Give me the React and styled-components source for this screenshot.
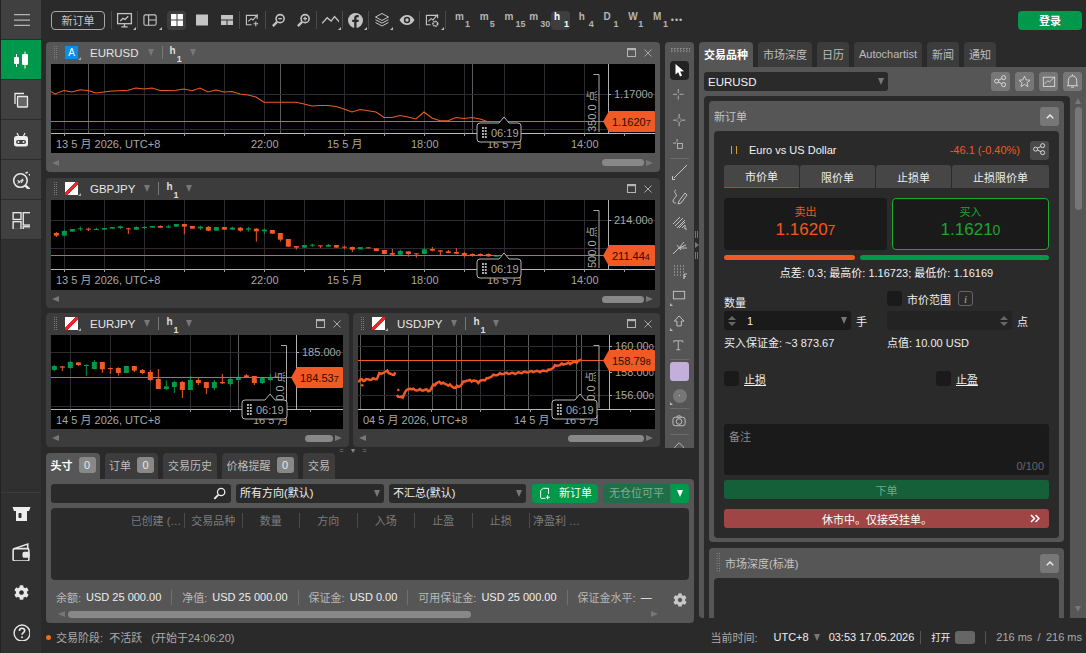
import React from 'react';
import styled, { createGlobalStyle } from 'styled-components';
import { FaCog } from 'react-icons/fa';

const GlobalStyle = createGlobalStyle`
  html, body { margin: 0; padding: 0; background: #2a2a2a; overflow: hidden; }
  * { box-sizing: border-box; }
  body { font-family: "Liberation Sans", "Noto Sans CJK SC", sans-serif; font-size: 11px; color: #e6e6e6; }
`;

const ORANGE = '#f15a24';
const GREEN = '#00984a';

const Page = styled.div`display: grid; grid-template-columns: 41px 1fr; grid-template-rows: 653px; width: 1086px; height: 653px; overflow: hidden;`;

/* ---------- left rail ---------- */
const Rail = styled.nav`display: flex; flex-direction: column; background: #303030; border-left: 1px solid #222; height: 653px;`;
const RailItem = styled.div`
  display: flex; align-items: center; justify-content: center; height: ${p => p.$h || 40}px;
  background: ${p => (p.$active ? GREEN : p.$plain ? 'transparent' : '#404040')};
  border-bottom: ${p => (p.$plain ? 'none' : '1px solid #2c2c2c')};
  color: ${p => p.$c || '#e8e8e8'}; flex-shrink: 0;
`;
const RailSpacer = styled.div`flex: 1; border-bottom: 1px solid #3c3c3c; margin-bottom: 1px;`;
const RailGroup = styled.div`display: flex; flex-direction: column; margin-bottom: 3px;`;

const Main = styled.div`display: flex; flex-direction: column; min-width: 0; height: 653px;`;

/* ---------- top toolbar ---------- */
const Toolbar = styled.header`display: flex; align-items: center; height: 40px; padding-left: 10px; flex-shrink: 0;`;
const NewOrder = styled.div`width: 54px; height: 19px; border: 1px solid #a8a8a8; border-radius: 4px; color: #c8c8c8; display: flex; align-items: center; justify-content: center; margin-right: 6px;`;
const Sep = styled.span`width: 1px; height: 18px; background: #4a4a4a; flex-shrink: 0;`;
const ToolCell = styled.div`width: 25px; height: 19px; display: flex; align-items: center; justify-content: center; color: #c4c4c4; flex-shrink: 0; position: relative; margin-left: ${p => p.$ml || 0}px;`;
const ActiveBg = styled.div`width: 19px; height: 19px; border-radius: 4px; background: #3e3e3e; display: flex; align-items: center; justify-content: center; color: #fff;`;
const Corner = styled.i`position: absolute; right: 1px; bottom: 0; width: 0; height: 0; border-left: 3px solid transparent; border-bottom: 3px solid #bbb;`;
const Frames = styled.div`display: flex; margin-left: 6px;`;
const Frame = styled.div`
  width: 19px; height: 19px; margin-right: 5.75px; border-radius: 4px; background: ${p => (p.$active ? '#3e3e3e' : 'transparent')};
  font-weight: 700; color: ${p => (p.$active ? '#fff' : '#b4b4b4')}; position: relative; font-size: 10px; padding: 0 0 0 3px; line-height: 11px; white-space: nowrap;
`;
const FrameSub = styled.sub`position: absolute; right: ${p => (p.$wide ? -5 : 1)}px; top: 8px; font-size: 9px; line-height: 11px; vertical-align: baseline;`;
const More = styled.div`color: #bbb; font-size: 9px; letter-spacing: 1px; margin-left: -4px;`;
const Login = styled.div`margin-left: auto; margin-right: 4px; width: 64px; height: 19px; background: ${GREEN}; border-radius: 4px; display: flex; align-items: center; justify-content: center; color: #fff; font-weight: 700; font-size: 11px;`;

/* ---------- workspace ---------- */
const Workspace = styled.div`display: flex; flex: 1; padding: 2px 0 0 5px; min-height: 0;`;
const LeftCol = styled.div`width: 648px; display: flex; flex-direction: column; flex-shrink: 0;`;
const TopRow = styled.div`display: flex; gap: 5px; height: 406px;`;
const Charts = styled.div`width: 614px; display: flex; flex-direction: column;`;
const ChartRow = styled.div`display: flex; gap: 4px; margin-top: ${p => p.$mt || 0}px;`;
const ChartWin = styled.section`
  width: ${p => p.$w}px; height: ${p => p.$h}px; border-radius: 4px; background: ${p => (p.$active ? '#565656' : '#3c3c3c')};
  display: flex; flex-direction: column; padding: 0 5px; flex-shrink: 0;
`;
const ChartHead = styled.div`height: ${p => p.$h || 22}px; display: flex; align-items: center; flex-shrink: 0; padding-bottom: 1px;`;
const Grip = styled.span`width: 4px; height: 14px; margin: 0 8px 0 2px; flex-shrink: 0; background-image: conic-gradient(#7c7c7c 25%, transparent 0 100%); background-size: 2px 2px;`;
const SymIcon = styled.span`
  width: 13px; height: 13px; flex-shrink: 0; display: flex; align-items: center; justify-content: center; color: #fff; font-size: 10px; position: relative; margin-right: 12px;
  background: ${p => (p.$blue ? '#0a8fe8' : 'linear-gradient(135deg, #fff 0 42%, #e8262a 42% 58%, #fff 58%)')};
  &::after { content: ''; position: absolute; right: -3px; bottom: -1px; border-left: 3px solid transparent; border-bottom: 3px solid #aaa; }
`;
const SymName = styled.span`color: #e4e4e4; font-size: 11.5px;`;
const Tri = styled.i`display: inline-block; width: 0; height: 0; border-left: 3.5px solid transparent; border-right: 3.5px solid transparent; border-top: 7px solid ${p => p.$c || '#777'}; margin-left: ${p => (p.$push ? 'auto' : `${p.$ml ?? 9}px`)}; flex-shrink: 0;`;
const HeadSep = styled.span`width: 1px; height: 13px; background: #777; margin: 0 7px 0 8px;`;
const Period = styled.span`font-weight: 700; font-size: 10px; color: #ddd; position: relative; top: -2px; width: 15px;`;
const PeriodSub = styled.span`position: relative; top: 8px; left: 1px; font-size: 9px;`;
const WinBtns = styled.div`margin-left: auto; display: flex; align-items: center; gap: 8px; padding-right: 3px; color: #aaa;`;
const Plot = styled.svg`display: block; flex-shrink: 0;`;
const AxisText = styled.text`font-size: 11px; fill: ${p => p.$c || '#a8a8a8'};`;
const Small = styled.tspan`font-size: 9px;`;

const HScroll = styled.div`flex: 1; display: flex; align-items: center; padding: 0 2px 0 1px; gap: 2px;`;
const ScrollTrack = styled.div`flex: 1; display: flex; justify-content: ${p => (p.$start ? 'flex-start' : 'flex-end')};`;
const Thumb = styled.div`width: ${p => p.$w}px; height: 7px; border-radius: 4px; background: #888;`;
const ArrowL = styled.i`width: 0; height: 0; border-top: 3.5px solid transparent; border-bottom: 3.5px solid transparent; border-right: 7px solid #777; flex-shrink: 0;`;
const ArrowR = styled.i`width: 0; height: 0; border-top: 3.5px solid transparent; border-bottom: 3.5px solid transparent; border-left: 7px solid #777; flex-shrink: 0;`;

/* ---------- drawing tools ---------- */
const ToolsCol = styled.aside`width: 29px; height: 406px; background: #555; border-radius: 4px 4px 0 0; overflow: hidden; display: flex; flex-direction: column; align-items: center; flex-shrink: 0;`;
const ToolGrip = styled.div`height: 16px; width: 20px; flex-shrink: 0; padding: 6px 0 5px; background-clip: content-box; background-origin: content-box; background-image: conic-gradient(#8a8a8a 25%, transparent 0 100%); background-size: 3px 2.5px;`;
const Tool = styled.div`height: 25px; width: 19px; flex-shrink: 0; display: flex; align-items: center; justify-content: center; color: #c4c4c4; position: relative;`;
const ToolActive = styled.div`width: 19px; height: 19px; background: #222; border-radius: 4px; display: flex; align-items: center; justify-content: center; color: #fff;`;
const ToolDiv = styled.div`height: 1px; width: 19px; background: #6a6a6a; flex-shrink: 0;`;
const Swatch = styled.div`width: 19px; height: 19px; background: #c4aedb; border-radius: 3px; margin: 2px 0; flex-shrink: 0;`;
const Dot = styled.div`width: 14px; height: 14px; border-radius: 50%; background: #777; display: flex; align-items: center; justify-content: center; &::after { content: ''; width: 1.5px; height: 1.5px; background: #ddd; border-radius: 50%; }`;
const CornerL = styled.i`position: absolute; left: 0; bottom: 3px; border-right: 3px solid transparent; border-bottom: 3px solid #bbb;`;

const HSash = styled.div`height: 5px; width: 614px; display: flex; align-items: center; justify-content: center; gap: 6px; color: #888; font-size: 7px; line-height: 5px; flex-shrink: 0;`;
const VSash = styled.div`width: 5px; height: 406px; display: flex; flex-direction: column; align-items: center; justify-content: center; gap: 4px; color: #8a8a8a; flex-shrink: 0;`;
const SashBars = styled.span`width: 3px; height: 7px; border-left: 1px solid #777; border-right: 1px solid #777;`;
const SashTri = styled.i`border-top: 3px solid transparent; border-bottom: 3px solid transparent; border-left: 4px solid #777;`;

/* ---------- bottom panel ---------- */
const TabBar = styled.div`height: ${p => p.$h}px; display: flex; gap: 5px; flex-shrink: 0;`;
const Tab = styled.div`
  padding: 0 0 2px; display: flex; align-items: center; gap: 6px; border-radius: 4px 4px 0 0;
  background: ${p => (p.$active ? '#565656' : '#3c3c3c')}; color: ${p => (p.$active ? '#fff' : '#bdbdbd')}; white-space: nowrap; font-size: 11px;
  width: ${p => p.$w}px; justify-content: center;
  font-weight: ${p => (p.$active ? 700 : 400)};
`;
const Badge = styled.span`width: 17px; height: 16px; border-radius: 3px; background: #888; color: #e8e8e8; display: flex; align-items: center; justify-content: center; font-size: 11px; font-weight: 400;`;
const BottomPanel = styled.div`height: 144px; background: #565656; border-radius: 0 4px 4px 4px; padding: 5px; display: flex; flex-direction: column;`;
const FilterRow = styled.div`display: flex; height: 19px; align-items: stretch; line-height: 17px;`;
const Field = styled.div`
  width: ${p => p.$w}px; margin-left: ${p => p.$ml || 0}px; background: #2a2a2a; border-radius: 3px; display: flex; align-items: center;
  padding: 0 4px; color: #eee; justify-content: space-between; flex-shrink: 0;
`;
const GreenBtn = styled.div`width: 66px; margin-left: 6px; background: ${GREEN}; border-radius: 4px; color: #fff; display: flex; align-items: center; justify-content: center; gap: 7px;`;
const SplitBtn = styled.div`width: 86px; margin-left: 5px; display: flex; border-radius: 4px; overflow: hidden;`;
const SplitMain = styled.div`flex: 1; background: #1f6e47; color: #7fae95; display: flex; align-items: center; justify-content: center;`;
const SplitArrow = styled.div`width: 19px; background: ${GREEN}; border-left: 1px solid #2b7a52; display: flex; align-items: center; justify-content: center;`;
const Table = styled.div`height: 72px; margin-top: 5px; background: #2a2a2a; border-radius: 4px; display: flex; padding: 5px 0 0 77px; align-items: flex-start;`;
const Th = styled.div`width: ${p => p.$w || 57.5}px; height: 15px; border-right: ${p => (p.$last ? 'none' : '1px solid #4a4a4a')}; color: #7c7c7c; display: flex; align-items: center; justify-content: ${p => (p.$left ? 'flex-start' : 'center')}; padding-left: ${p => (p.$left ? 3 : 0)}px; padding-bottom: 2px; white-space: nowrap; flex-shrink: 0;`;
const Summary = styled.div`display: flex; align-items: center; height: 30px; padding: 4px 0 0 5px; white-space: nowrap;`;
const SumLabel = styled.span`color: #b8b8b8; margin-right: 5px;`;
const SumVal = styled.span`color: #eee;`;
const SumSep = styled.span`width: 1px; height: 15px; background: #707070; margin: 0 10px;`;
const SumGear = styled.span`margin-left: auto; margin-right: 2px; color: #c8c8c8; display: flex; position: relative; top: 3px;`;
const BottomScroll = styled.div`display: flex; align-items: center; height: 8px; padding: 0 31px 0 7px; gap: 3px;`;

/* ---------- right panel ---------- */
const RightCol = styled.div`width: 387px; height: 576px; display: flex; flex-direction: column; flex-shrink: 0;`;
const RightBody = styled.div`flex: 1; min-height: 0; background: #565656; border-radius: 0 0 0 4px; padding: 5px 0 0 5px; display: flex; flex-direction: column;`;
const SymbolRow = styled.div`display: flex; height: 19px; padding-right: 4px; align-items: stretch;`;
const SymbolSelect = styled.div`width: 184px; background: #2a2a2a; border-radius: 3px; display: flex; align-items: center; justify-content: space-between; padding: 0 4px; color: #f2f2f2; font-size: 11.5px;`;
const SquareBtns = styled.div`margin-left: auto; display: flex; gap: 5px;`;
const SquareBtn = styled.div`width: 19px; height: 19px; border-radius: 3px; background: ${p => (p.$dark ? '#4a4a4a' : '#777')}; color: #ddd; display: flex; align-items: center; justify-content: center; flex-shrink: 0;`;
const ScrollWrap = styled.div`flex: 1; min-height: 0; display: flex; margin-top: 5px;`;
const ScrollArea = styled.div`width: 366px; background: #2a2a2a; border-radius: 4px 4px 0 0; padding: 5px 6px 5px 5px; overflow: hidden; flex-shrink: 0;`;
const VBar = styled.div`flex: 1; display: flex; flex-direction: column; align-items: center; padding: 2px 0 6px;`;
const VThumb = styled.div`width: 7px; height: 103px; margin-top: 3px; border-radius: 4px; background: #777;`;
const ArrowUp = styled.i`border-left: 3.5px solid transparent; border-right: 3.5px solid transparent; border-bottom: 6px solid #777;`;
const ArrowDn = styled.i`margin-top: auto; border-left: 3.5px solid transparent; border-right: 3.5px solid transparent; border-top: 6px solid #777;`;

const Card = styled.div`background: #565656; border-radius: 4px; padding: 0 5px 4px; margin-bottom: 6px;`;
const CardHead = styled.div`height: 30px; display: flex; align-items: center; color: #c4c4c4; justify-content: space-between;`;
const CardTitle = styled.div`display: flex; align-items: center; gap: 5px;`;
const CardGrip = styled.span`width: 5px; height: 20px; margin-left: 1px; background-image: conic-gradient(#9a9a9a 25%, transparent 0 100%); background-size: 2.5px 2.5px;`;
const Inner = styled.div`background: #2a2a2a; border-radius: 4px; padding: 9px 10px 10px; min-height: ${p => p.$min || 0}px;`;
const SymLine = styled.div`height: 20px; display: flex; align-items: center; color: #f2f2f2;`;
const Pause = styled.span`width: 6px; height: 8px; border-left: 1px solid #d8a030; border-right: 1px solid #d8a030; margin: 0 12px 0 7px;`;
const Change = styled.span`margin-left: auto; color: #f0591c; margin-right: 10px;`;
const OrderTabs = styled.div`display: grid; grid-template-columns: 75px 75px 75px 1fr; gap: 1px; height: 23px; margin-top: 5px;`;
const OrderTab = styled.div`background: #464646; display: flex; align-items: center; justify-content: center; color: #eee; border-bottom: ${p => (p.$active ? `1px solid ${GREEN}` : 'none')}; border-radius: 3px 3px 0 0;`;
const Quote = styled.div`display: grid; grid-template-columns: 163px 157px; gap: 5px; margin-top: 10px; height: 52px;`;
const QuoteBox = styled.div`background: #1a1a1a; border-radius: 4px; border: ${p => (p.$buy ? '1px solid #1caa2c' : 'none')}; display: flex; flex-direction: column; align-items: center; justify-content: flex-start; padding-top: ${p => (p.$buy ? 4 : 5)}px; color: ${p => (p.$buy ? '#1fa52e' : '#f0591c')};`;
const Price = styled.div`font-size: 17px; line-height: 22px;`;
const PriceEnd = styled.span`font-size: 14px;`;
const Bars = styled.div`display: grid; grid-template-columns: 131px 189px; gap: 5px; margin-top: 5px; height: 5px;`;
const Bar = styled.div`background: ${p => p.$c}; border-radius: 3px;`;
const Stats = styled.div`height: 16px; margin-top: 4px; display: flex; align-items: center; justify-content: center; color: #f2f2f2;`;
const FormGrid = styled.div`display: grid; grid-template-columns: 163px 162px; grid-template-rows: 20px 19px 20px; margin-top: 11px;`;
const Label = styled.div`color: #eee; display: flex; align-items: flex-end; padding-bottom: 1px;`;
const CheckRow = styled.div`display: flex; align-items: center; gap: 5px; color: #eee; height: 15px;`;
const Box = styled.span`width: 15px; height: 15px; border-radius: 3px; background: #1a1a1a; flex-shrink: 0;`;
const InfoI = styled.span`width: 15px; height: 15px; border: 1px solid #666; border-radius: 3px; color: #aaa; font-family: "Liberation Serif", serif; font-style: italic; display: flex; align-items: center; justify-content: center; margin-left: 2px;`;
const InputRow = styled.div`display: flex; align-items: center; color: #eee;`;
const NumInput = styled.div`width: ${p => p.$w}px; height: 19px; background: ${p => (p.$dim ? '#232323' : '#1a1a1a')}; border-radius: 3px; display: flex; align-items: center; padding: 0 4px; margin-right: 5px; justify-content: ${p => (p.$dim ? 'flex-end' : 'flex-start')};`;
const Spin = styled.div`display: flex; flex-direction: column; gap: 2px;`;
const SpinU = styled.i`border-left: 4px solid transparent; border-right: 4px solid transparent; border-bottom: 4px solid #666;`;
const SpinD = styled.i`border-left: 4px solid transparent; border-right: 4px solid transparent; border-top: 4px solid #666;`;
const QtyValue = styled.span`margin-left: 11px; color: #eee;`;
const InfoLine = styled.div`display: flex; align-items: center; margin-top: 4px; color: #eee; height: 16px;`;
const StopRow = styled.div`display: grid; grid-template-columns: 212px 1fr; margin-top: 21px;`;
const Under = styled.span`text-decoration: underline; color: #eee;`;
const Note = styled.div`height: 51px; margin-top: 38px; background: #1a1a1a; border-radius: 3px; padding: 4px 5px 3px; display: flex; flex-direction: column; justify-content: space-between; color: #8a8a8a;`;
const Count = styled.div`text-align: right; color: #666;`;
const Submit = styled.div`height: 19px; margin-top: 5px; background: #156038; border-radius: 3px; color: #6fa88b; display: flex; align-items: center; justify-content: center;`;
const Closed = styled.div`height: 19px; margin-top: 10px; background: #a04545; border-radius: 3px; color: #fff; display: flex; align-items: center; padding-right: 9px; padding-left: 98px;`;
const ClosedArrows = styled.span`margin-left: auto; display: flex;`;

/* ---------- status ---------- */
const Status = styled.footer`height: 30px; display: flex; align-items: center; padding: 0 4px 2px 5px; flex-shrink: 0; color: #aaa; white-space: nowrap;`;
const StatusDot = styled.i`width: 5px; height: 5px; border-radius: 50%; background: #f26a1b; margin-right: 5px;`;
const StatusRight = styled.div`margin-left: auto; display: flex; align-items: center;`;
const StatusLabel = styled.span`margin-right: 16px;`;
const Clock = styled.span`color: #eee; margin-left: ${p => p.$ml || 0}px;`;
const OpenLabel = styled.span`color: #eee; font-size: 9.5px;`;
const StatusSep = styled.span`width: 1px; height: 13px; background: #555; margin: 0 10px 0 ${p => p.$ml ?? 6}px;`;
const Toggle = styled.span`width: 20px; height: 13px; border-radius: 3px; background: #666; margin: 0 10px 0 5px;`;

/* ---------- svg helper ---------- */
const Svg = ({ s = 16, vb = 16, children, fill = 'none', sw = 1.2, ...r }) => (
  <svg width={s} height={s} viewBox={`0 0 ${vb} ${vb}`} fill={fill} stroke={fill === 'none' ? 'currentColor' : 'none'} strokeWidth={sw} {...r}>{children}</svg>
);

const IconGrid = () => <Svg fill="currentColor" s={12} vb={12}><path d="M0 0h5.5v5.5H0zM6.5 0H12v5.5H6.5zM0 6.5h5.5V12H0zM6.5 6.5H12V12H6.5z" /></Svg>;
const IconSingle = () => <Svg fill="currentColor" s={12} vb={12}><rect width="12" height="11" y="0.5" /></Svg>;
const IconTwoUp = () => <Svg fill="currentColor" s={12} vb={12}><path d="M0 1h12v4.5H0zM0 6.5h5.5V11H0zM6.5 6.5H12V11H6.5z" /></Svg>;
const IconMonitor = () => <Svg s={17}><rect x="1.5" y="1.5" width="13" height="9.5" /><path d="M4 8.5l2.5-2.5 2 1 3-3M8 11v2.5M5 14h6" /></Svg>;
const IconLayout = () => <Svg s={15}><rect x="1" y="2" width="13" height="11" rx="1.5" /><path d="M6 2v11M6 7.5h8" /></Svg>;
const IconChartAdd = () => <Svg s={15}><path d="M13 6.5V2.5H1.5v10H7M3.5 9l3-3 2 1.5 5-6M11.5 9v5M9 11.5h5" /></Svg>;
const IconZoom = ({ plus }) => <Svg s={15}><circle cx="9.7" cy="6" r="4.3" strokeWidth="1.7" /><path d="M6.5 9.5L2 14" strokeWidth="2.4" /><path d={plus ? 'M7.7 6h4M9.7 4v4' : 'M7.7 6h4'} strokeWidth="1.4" /></Svg>;
const IconLines = () => <Svg s={18}><path d="M1 11l4.5-5 3.5 3 3-4 5 5.5" /></Svg>;
const IconF = () => <svg width="15" height="15" viewBox="0 0 15 15"><circle cx="7.5" cy="7.5" r="7.5" fill="#c4c4c4" /><path d="M8.5 15V9h2l.3-2.3H8.5V5.3c0-.7.2-1.1 1.1-1.1h1.2V2.2C10.5 2.1 9.9 2 9.2 2 7.4 2 6.2 3.1 6.2 5v1.7h-2V9h2v6z" fill="#2a2a2a" /></svg>;
const IconLayers = () => <Svg s={16} sw="1"><path d="M8 1.5L14.5 5 8 8.5 1.5 5zM1.5 7.7L8 11.2l6.5-3.5M1.5 10.5L8 14l6.5-3.5" /></Svg>;
const IconEye = () => <svg width="16" height="16" viewBox="0 0 16 16"><path d="M0.5 8C2.5 4.5 5 3 8 3s5.5 1.5 7.5 5c-2 3.5-4.5 5-7.500 5S2.500 11.500 0.500 8z" fill="#c4c4c4" /><circle cx="8" cy="8" r="3.2" fill="#2a2a2a" /><circle cx="8" cy="8" r="1.7" fill="#c4c4c4" /></svg>;
const IconGearChart = () => <Svg s={15}><path d="M13.500 5.5v-3H1.500v10H6M3.500 9l3-3 2 1.500 5-6" /><circle cx="11" cy="11.500" r="2.500" strokeWidth="1.800" strokeDasharray="1.500 .6" /></Svg>;

const IconCandles = () => <svg width="18" height="18" viewBox="0 0 18 18" fill="#fff"><rect x="2" y="6" width="5" height="7" rx="1" /><rect x="4" y="3" width="1" height="13" /><rect x="10" y="3" width="6" height="11" rx="1" /><rect x="12.500" y="0.500" width="1" height="17" /></svg>;
const IconCopy = () => <Svg s={16} sw="1.300"><rect x="4.500" y="4.500" width="10" height="10.500" fill="#666" rx=".5" /><path d="M2 12V1.500h9" /></Svg>;
const IconRobot = () => <svg width="16" height="16" viewBox="0 0 16 16"><path d="M4 1l1.500 3M12 1l-1.500 3" stroke="#eee" strokeWidth="1.200" /><rect x="1" y="4" width="14" height="10.500" rx="2.500" fill="#eee" /><rect x="3" y="8" width="10" height="4" rx="2" fill="#404040" /><circle cx="5.500" cy="10" r="1" fill="#eee" /><circle cx="10.500" cy="10" r="1" fill="#eee" /></svg>;
const IconScan = () => <Svg s={18} sw="1.400"><circle cx="7.500" cy="8.500" r="6" /><path d="M12 13l4 4" strokeWidth="2.200" /><path d="M5 8l2 2.500M10 8l-2 2.500M5 11l5-4" strokeWidth="1" /><path d="M12 2l2-1M15 3.500l1.500-.5" /></Svg>;
const IconDash = () => <Svg s={18} sw="1.200"><rect x="1" y="1.500" width="7" height="6" /><rect x="10" y="1.500" width="7" height="11" /><rect x="1" y="9.500" width="7" height="7" /><rect x="10" y="14" width="7" height="2.500" /></Svg>;
const IconAtm = () => <svg width="19" height="16" viewBox="0 0 19 16"><path d="M0.500 1h18l-1.500 4H2z" fill="#eee" /><rect x="4" y="3" width="11" height="12" fill="#eee" /><rect x="6.500" y="7" width="3" height="5" rx=".8" fill="#303030" /></svg>;
const IconWallet = () => <Svg s={18} sw="1.400"><rect x="1" y="5" width="14" height="11" rx="1.500" /><path d="M2 5l12-4v4" /><rect x="10" y="8.500" width="5" height="4" fill="currentColor" rx="1" /></Svg>;
const IconHelp = () => <Svg s={17} sw="1.300"><circle cx="8.500" cy="8.500" r="7.500" /><path d="M6 6.500C6 5 7.100 4 8.500 4S11 5 11 6.300C11 8 8.500 8.200 8.500 10" strokeWidth="1.500" /><circle cx="8.500" cy="12.500" r=".9" fill="currentColor" stroke="none" /></Svg>;
const IconMenu = () => <Svg s={17} sw="1.200"><path d="M1 3.500h15M1 8.500h15M1 13.500h15" /></Svg>;

const IconMax = () => <svg width="9" height="9" viewBox="0 0 9 9"><rect x=".5" y=".5" width="8" height="8" fill="none" stroke="#b5b5b5" /><rect width="9" height="2.200" fill="#b5b5b5" /></svg>;
const IconX = () => <svg width="8" height="8" viewBox="0 0 8 8"><path d="M.5.500l7 7M7.500.500l-7 7" stroke="#aaa" /></svg>;
const IconShare = () => <Svg s={14} sw="1.100"><circle cx="3" cy="7" r="2.300" /><circle cx="11" cy="3" r="2.300" /><circle cx="11" cy="11" r="2.300" /><path d="M5 6l4-2M5 8l4 2" /></Svg>;
const IconStar = () => <Svg s={13} sw="1"><path d="M8 1.500l2 4.500 4.800.4-3.700 3.200 1.200 4.700L8 11.700l-4.300 2.600 1.200-4.700L1.200 6.400 6 6z" /></Svg>;
const IconChartBox = () => <Svg s={14} sw="1"><rect x="1.500" y="2.500" width="13" height="10.500" /><path d="M3 10l3.500-3.500 2 1.500 5-5" /></Svg>;
const IconBell = () => <Svg s={15} sw="1"><path d="M3.500 11.500V7c0-3 2-5 4.500-5s4.500 2 4.500 5v4.500l1 1H2.500zM8 .500v1.500M6.500 14h3" /></Svg>;
const IconChev = () => <svg width="8" height="5" viewBox="0 0 8 5"><path d="M.8 4.200L4 1l3.200 3.200" stroke="#e8e8e8" strokeWidth="1.500" fill="none" /></svg>;
const IconFind = () => <Svg s={14}><circle cx="9.300" cy="5.700" r="4.200" strokeWidth="1.400" /><path d="M6 9L1.500 13.500" strokeWidth="2.200" /></Svg>;
const IconDocAdd = () => <Svg s={14} sw="1.100"><path d="M3 12.500V4l3-2.500h6V8M8.500 13H3.500" /><path d="M11 9.500v4.500M9 11.700h4.500" strokeWidth="1.300" /></Svg>;
const IconDouble = () => <svg width="10" height="9" viewBox="0 0 10 9"><path d="M1 1l3.500 3.500L1 8M5.500 1L9 4.500 5.500 8" stroke="#fff" strokeWidth="1.500" fill="none" /></svg>;

const IconPointer = () => <svg width="10" height="13" viewBox="0 0 10 13"><path d="M.500 0v10.500l2.700-2.300 1.800 4.300 2-1-1.800-4 3.800-.3z" fill="#fff" /></svg>;
const IconCross = () => <Svg s={13} sw="1"><path d="M6.500 0v5M6.500 8v5M0 6.500h5M8 6.500h5" /></Svg>;
const IconCrossDots = () => <Svg s={14} sw="1"><path d="M7 0v5M7 9v5M0 7h5M9 7h5M5 5l.8.8M9 5l-.8.8M5 9l.8-.8M9 9l-.8-.8" /></Svg>;
const IconCrossBox = () => <Svg s={13} sw="1"><path d="M5 0v4M0 5h4" /><rect x="5.500" y="5.500" width="6" height="6" /></Svg>;
const IconLine = () => <Svg s={16} sw="1"><path d="M15 1L2 14" /><path d="M0 15.500h3M.5 12v3.500" /></Svg>;
const IconPen = () => <Svg s={16} sw="1"><path d="M4 1c-3 1 0 4 .5 5S1 10 1 12s2 2 3 2M7 12l6-8 2 2-6 8-3 1z" /></Svg>;
const IconHatch = () => <Svg s={16} sw="1"><path d="M1 10l7-7M3 12l8-8M5 14l8-8M7 14l6-6M10 14l3-3" /><path d="M13 11v4h2" /></Svg>;
const IconFork = () => <Svg s={16} sw="1"><path d="M1 15l6-6M7 9l5-6M7 9l7-3M7 9l8 0M5 6l4 5" /></Svg>;
const IconF2 = () => <Svg s={16} sw="1"><path d="M2 2h12M2 5h12M2 8h12M2 11h7" strokeDasharray="1 2" /><path d="M12 10v5M12 10h3M12 12.500h2" strokeWidth="1.200" /></Svg>;
const IconRect = () => <Svg s={15} sw="1"><rect x="1.500" y="2.500" width="12" height="8" /></Svg>;
const IconUp = () => <Svg s={14} sw="1.100"><path d="M7 1l5.500 6H9.500v5.500h-5V7H1.500z" /></Svg>;
const IconT = () => <Svg s={13} sw="1.100"><path d="M1 3V1h11v2M6.500 1v11M4 12h5" /></Svg>;
const IconCam = () => <Svg s={15} sw="1"><rect x="1" y="3.500" width="13" height="9" rx="2.500" /><circle cx="7.500" cy="8" r="3" /><path d="M5 3.500l1-1.500h3l1 1.500" /></Svg>;
const IconHouse = () => <Svg s={14} sw="1"><path d="M2 7l5-5 5 5v6H2z" /></Svg>;

/* ---------- chart ---------- */
const TOOLTIP_TEXT = '06:19';

function bubble({ x1, x2, y1, y2, nx, ny }) {
  return `M${x1 + 3} ${y1}L${nx - 5} ${y1}L${nx} ${ny}L${nx + 5} ${y1}L${x2 - 3} ${y1}Q${x2} ${y1} ${x2} ${y1 + 3}L${x2} ${y2 - 3}Q${x2} ${y2} ${x2 - 3} ${y2}L${x1 + 3} ${y2}Q${x1} ${y2} ${x1} ${y2 - 3}L${x1} ${y1 + 3}Q${x1} ${y1} ${x1 + 3} ${y1}Z`;
}

function Chart({ box, vGrid, vLight = [], hGrid, axisX, axisY, priceY, prices, tag, bracket, times, ticks, tip, children }) {
  const { x, y, w, h } = box;
  return (
    <Plot width={w} height={h} viewBox={`${x} ${y} ${w} ${h}`}>
      <rect x={x} y={y} width={w} height={h} fill="#000" />
      {vGrid.map(v => <line key={v} x1={v + .5} x2={v + .5} y1={y} y2={axisY} stroke="#2b2b32" />)}
      {vLight.map(v => <line key={v} x1={v + .5} x2={v + .5} y1={y} y2={axisY} stroke="#5c5c5c" />)}
      {hGrid.map(v => <line key={v} x1={x} x2={x + w} y1={v + .5} y2={v + .5} stroke="#2b2b32" />)}
      <line x1={axisX + .5} x2={axisX + .5} y1={y} y2={axisY} stroke="#b0b0b0" />
      {children}
      <line x1={x} x2={x + w} y1={priceY + .5} y2={priceY + .5} stroke={ORANGE} />
      <line x1={x} x2={x + w} y1={axisY + .5} y2={axisY + .5} stroke="#b8b8b8" />
      {ticks.map(v => <line key={v} x1={v + .5} x2={v + .5} y1={axisY} y2={axisY + 3} stroke="#999" />)}
      {prices.map(p => (
        <g key={p.t}>
          <line x1={axisX} x2={axisX + 3} y1={p.y + .5} y2={p.y + .5} stroke="#aaa" />
          <AxisText x={axisX + 6} y={p.y + 4}>{p.t}<Small>{p.e}</Small></AxisText>
        </g>
      ))}
      <path d={`M${bracket.x - 5} ${bracket.y1 + .5}H${bracket.x + .5}V${bracket.y2}`} stroke="#aaa" fill="none" />
      <AxisText $c="#aaa" x={bracket.tx} y={bracket.ty} transform={`rotate(-90 ${bracket.tx} ${bracket.ty})`}>{bracket.label}</AxisText>
      {times.map(t => <AxisText key={t.x} x={t.x} y={axisY + 15}>{t.t}</AxisText>)}
      <path d={`M${tag.x} ${(tag.y1 + tag.y2) / 2}L${tag.x + 6} ${tag.y1}H${x + w - 1}Q${x + w} ${tag.y1} ${x + w} ${tag.y1 + 1}V${tag.y2 - 1}Q${x + w} ${tag.y2} ${x + w - 1} ${tag.y2}H${tag.x + 6}Z`} fill={ORANGE} />
      <AxisText $c="#2a0d02" x={tag.x + 9} y={(tag.y1 + tag.y2) / 2 + 4}>{tag.t}<Small>{tag.e}</Small></AxisText>
      <path d={bubble(tip)} fill="#000" stroke="#b4b4b4" />
      <g fill="#b4b4b4">
        {[0, 1, 2, 3].map(r => [0, 1].map(c => <rect key={`${r}${c}`} x={tip.x1 + 5 + c * 2.8} y={tip.y1 + 4 + r * 3} width="1.900" height="2" />))}
      </g>
      <AxisText x={tip.x1 + 14} y={tip.y1 + 14}>{TOOLTIP_TEXT}</AxisText>
    </Plot>
  );
}

const Candles = ({ data, ox, oy }) => (
  <g>
    {data.map(([zx, t, b, wt, wb, c], i) => {
      const col = c === 'g' ? GREEN : ORANGE;
      const cx = ox + zx / 3;
      return (
        <g key={i}>
          <line x1={cx} x2={cx} y1={oy + wt / 3} y2={oy + wb / 3} stroke={col} />
          <rect x={cx - 2.500} y={oy + t / 3} width="5" height={Math.max((b - t) / 3, 1)} fill={col} />
        </g>
      );
    })}
  </g>
);

const EURUSD_LINE = '51,91.700 55,94 64,90.500 72,92 80,89.700 88,90.500 96,93 104,92 112,91 120,90.700 128,90.300 136,88 144,89 152,88 160,90.500 168,90.500 176,90.300 184,89 192,90.700 200,88 208,92 216,90 224,92 232,91.500 240,94 248,95 256,97 264,102.300 272,102.300 280,102.300 288,102.300 296,102.300 304,104 312,106 320,105.500 328,105.500 336,106.500 344,109 352,112 360,109.500 376,112 384,117.500 392,117.500 400,115.500 408,117 416,119 424,112 432,118 440,120.700 448,120.700 456,117.500 464,118.500 472,117.500 480,119 488,121.700';

const GBP = [
  [49,171,179,168,183,'o'],[73,165,179,162,180,'g'],[97,159,167,159,167,'g'],[121,157,160,152,165,'g'],[145,158,160,155,165,'o'],[169,159,161,155,162,'g'],[193,156,161,156,161,'g'],[217,153,158,153,158,'g'],[241,151,156,149,159,'g'],[265,157,158,155,174,'o'],[289,153,161,151,162,'g'],[313,153,156,150,159,'g'],[337,150,155,150,155,'g'],[361,150,155,148,156,'o'],[385,151,155,147,156,'g'],[409,144,152,144,152,'g'],[433,144,152,144,174,'o'],[457,150,158,150,158,'o'],[481,152,157,149,162,'g'],[505,153,164,150,165,'o'],[529,153,164,153,164,'g'],[553,153,161,153,161,'o'],[577,155,161,152,162,'g'],[601,155,164,153,167,'o'],[625,157,161,153,167,'g'],[649,158,166,156,197,'o'],[673,161,166,158,174,'g'],[697,162,173,162,173,'o'],[721,171,191,171,197,'o'],[745,189,212,189,212,'o'],[769,210,215,210,221,'o'],[793,207,215,207,215,'g'],[817,206,209,203,213,'g'],[841,208,209,208,216,'o'],[865,207,212,204,213,'g'],[889,207,215,207,215,'o'],[913,212,214,209,220,'o'],[937,213,221,212,228,'o'],[961,213,220,213,220,'g'],
  [985,214,217,214,217,'o'],[1009,217,225,217,225,'o'],[1033,222,234,222,234,'o'],[1057,231,236,219,238,'o'],[1081,225,236,221,238,'g'],[1105,226,234,226,242,'o'],[1129,232,235,232,245,'o'],[1153,220,234,214,234,'g'],[1177,219,224,213,226,'o'],[1201,223,227,223,238,'o'],[1225,226,231,222,232,'o'],[1249,228,233,216,234,'o'],[1273,231,239,228,245,'o'],[1297,234,238,232,242,'o'],[1321,234,238,232,241,'o'],[1345,234,241,232,242,'o'],[1369,239,241,239,241,'g']
];
const EJ = [
  [43,168,180,165,183,'g'],[67,169,173,169,183,'o'],[91,156,174,153,176,'g'],[115,157,165,157,168,'o'],[139,165,168,162,197,'g'],[163,156,177,150,178,'g'],[187,156,178,156,189,'o'],[211,174,175,173,191,'o'],[235,174,189,172,197,'o'],[259,168,189,168,189,'g'],[283,168,182,168,186,'o'],[307,180,189,177,193,'o'],[331,186,210,180,213,'o'],[355,207,237,177,237,'o'],[379,229,237,211,240,'g'],[403,216,231,213,249,'g'],[427,216,240,213,264,'o'],[451,210,240,198,240,'g'],[475,210,219,204,225,'o'],[499,216,234,216,252,'o'],[523,216,234,210,240,'g'],[547,216,220,192,222,'o'],[571,207,222,204,228,'g'],[595,201,210,195,213,'g'],[619,196,201,192,204,'o'],[643,198,219,198,225,'o'],[667,204,219,204,222,'g'],[691,204,210,192,213,'g']
];
const USD = '24,215 32,208 40,212 48,209 64,208 80,206 88,192 100,188 112,184 120,190 128,196 136,188';
const USD2 = '140,255 150,262 158,262 165,245 180,235 195,240 210,240 225,240 240,242 250,225 268,216 285,222 300,226 312,233 330,228 345,212 370,212 385,216 400,210 415,205 425,198 450,192 470,190 495,190 520,187 550,184 575,184 600,180 615,168 640,162 660,160 680,155 694,150';

/* densified, slightly noisy tick series in absolute pixels */
const toAbs = (s, ox, oy) => {
  const pts = s.split(' ').map(p => p.split(',').map(Number));
  const out = [];
  pts.forEach((p, i) => {
    const q = pts[i + 1] || p;
    const n = Math.max(1, Math.round((q[0] - p[0]) / 5));
    for (let k = 0; k < n; k++) {
      const t = k / n;
      const zx = p[0] + (q[0] - p[0]) * t;
      const zy = p[1] + (q[1] - p[1]) * t;
      const idx = out.length;
      const noise = Math.sin(idx * 1.7) * 0.7 + Math.sin(idx * 3.1) * 0.4;
      out.push(`${(ox + zx / 3).toFixed(1)},${(oy + zy / 3 + noise).toFixed(1)}`);
    }
  });
  return out.join(' ');
};

function WinHeader({ name, blue }) {
  return (
    <ChartHead>
      <Grip />
      <SymIcon $blue={blue}>{blue ? 'A' : ''}</SymIcon>
      <SymName>{name}</SymName>
      <Tri />
      <HeadSep />
      <Period>h<PeriodSub>1</PeriodSub></Period>
      <Tri $ml={5} />
      <WinBtns><IconMax /><IconX /></WinBtns>
    </ChartHead>
  );
}

const Scroll = ({ w }) => (
  <HScroll><ArrowL /><ScrollTrack><Thumb $w={w} /></ScrollTrack><ArrowR /></HScroll>
);

const FRAMES = [['m', '1'], ['m', '5'], ['m', '15'], ['m', '30'], ['h', '1', true], ['h', '4'], ['D', '1'], ['W', '1'], ['M', '1']];

const GRID_40 = [64, 104, 144, 184, 224, 264, 304, 344, 384, 424, 464, 504, 544, 584];
const TICK_40 = [...GRID_40, 624];
const TIMES = [{ t: '13 5 月 2026, UTC+8', x: 56 }, { t: '22:00', x: 251 }, { t: '15 5 月', x: 327 }, { t: '18:00', x: 411 }, { t: '16 5 月', x: 487 }, { t: '14:00', x: 571 }];

export default function App() {
  return (
    <>
      <GlobalStyle />
      <Page>
        <Rail>
          <RailItem $c="#b4b4b4"><IconMenu /></RailItem>
          <RailItem $active><IconCandles /></RailItem>
          <RailItem><IconCopy /></RailItem>
          <RailItem><IconRobot /></RailItem>
          <RailItem><IconScan /></RailItem>
          <RailItem><IconDash /></RailItem>
          <RailSpacer />
          <RailGroup>
            <RailItem $plain $h={40}><IconAtm /></RailItem>
            <RailItem $plain $h={36}><IconWallet /></RailItem>
            <RailItem $plain $h={44}><FaCog size={15} /></RailItem>
            <RailItem $plain $h={36}><IconHelp /></RailItem>
          </RailGroup>
        </Rail>

        <Main>
          <Toolbar>
            <NewOrder>新订单</NewOrder>
            <Sep />
            <ToolCell><IconMonitor /><Corner /></ToolCell>
            <Sep />
            <ToolCell><IconLayout /><Corner /></ToolCell>
            <ToolCell $ml={1}><ActiveBg><IconGrid /></ActiveBg></ToolCell>
            <ToolCell><IconSingle /></ToolCell>
            <ToolCell><IconTwoUp /></ToolCell>
            <Sep />
            <ToolCell><IconChartAdd /></ToolCell>
            <Sep />
            <ToolCell><IconZoom /></ToolCell>
            <ToolCell><IconZoom plus /></ToolCell>
            <Sep />
            <ToolCell><IconLines /><Corner /></ToolCell>
            <Sep />
            <ToolCell><IconF /><Corner /></ToolCell>
            <Sep />
            <ToolCell><IconLayers /><Corner /></ToolCell>
            <ToolCell><IconEye /></ToolCell>
            <Sep />
            <ToolCell><IconGearChart /><Corner /></ToolCell>
            <Sep />
            <Frames>
              {FRAMES.map(([a, b, act]) => (
                <Frame key={a + b} $active={act}>{a}<FrameSub $wide={b.length > 1}>{b}</FrameSub></Frame>
              ))}
            </Frames>
            <More>•••</More>
            <Login>登录</Login>
          </Toolbar>

          <Workspace>
            <LeftCol>
              <TopRow>
                <Charts>
                  <ChartWin $w={614} $h={130} $active>
                    <WinHeader name="EURUSD" blue />
                    <Chart
                      box={{ x: 51, y: 64, w: 604, h: 89 }}
                      vGrid={GRID_40}
                      vLight={[88, 280, 472]}
                      hGrid={[94, 129]}
                      axisX={608} axisY={133} priceY={121}
                      prices={[{ t: '1.1700', e: '0', y: 94 }]}
                      tag={{ x: 603, y1: 111, y2: 132, t: '1.1620', e: '7' }}
                      bracket={{ x: 598.500, y1: 74, y2: 132, label: '350.0 点', tx: 596, ty: 132 }}
                      times={TIMES}
                      ticks={TICK_40}
                      tip={{ x1: 477, x2: 521, y1: 123, y2: 142, nx: 504, ny: 117 }}
                    >
                      <polyline points={EURUSD_LINE} fill="none" stroke={ORANGE} strokeWidth="1.100" />
                    </Chart>
                    <Scroll w={42} />
                  </ChartWin>

                  <ChartRow $mt={6}>
                    <ChartWin $w={614} $h={130}>
                      <WinHeader name="GBPJPY" />
                      <Chart
                        box={{ x: 51, y: 199, w: 604, h: 90 }}
                        vGrid={GRID_40}
                        hGrid={[219, 247]}
                        axisX={608} axisY={268} priceY={254}
                        prices={[{ t: '214.00', e: '0', y: 219 }]}
                        tag={{ x: 603, y1: 244, y2: 265, t: '211.44', e: '4' }}
                        bracket={{ x: 598.500, y1: 209, y2: 267, label: '500.0 点', tx: 596, ty: 267 }}
                        times={TIMES}
                        ticks={TICK_40}
                        tip={{ x1: 477, x2: 521, y1: 258, y2: 277, nx: 504, ny: 252 }}
                      >
                        <Candles data={GBP} ox={40} oy={175} />
                      </Chart>
                      <Scroll w={42} />
                    </ChartWin>
                  </ChartRow>

                  <ChartRow $mt={5}>
                    <ChartWin $w={303} $h={134}>
                      <WinHeader name="EURJPY" />
                      <Chart
                        box={{ x: 51, y: 335, w: 292, h: 94 }}
                        vGrid={[70, 110, 150, 190, 230, 270]}
                        vLight={[238]}
                        hGrid={[352, 406]}
                        axisX={296} axisY={409} priceY={377}
                        prices={[{ t: '185.00', e: '0', y: 352 }]}
                        tag={{ x: 291, y1: 367, y2: 388, t: '184.53', e: '7' }}
                        bracket={{ x: 286, y1: 345, y2: 408, label: '500.0 点', tx: 284, ty: 413 }}
                        times={[{ t: '14 5 月 2026, UTC+8', x: 56 }, { t: '16 5 月', x: 253 }]}
                        ticks={[70, 110, 150, 190, 230, 270, 310]}
                        tip={{ x1: 242, x2: 287, y1: 400, y2: 419, nx: 270, ny: 394 }}
                      >
                        <Candles data={EJ} ox={40} oy={310} />
                      </Chart>
                      <Scroll w={28} />
                    </ChartWin>
                    <ChartWin $w={307} $h={134}>
                      <WinHeader name="USDJPY" />
                      <Chart
                        box={{ x: 358, y: 335, w: 297, h: 94 }}
                        vGrid={[480, 552]}
                        vLight={[360, 384, 408, 432, 456, 461, 504, 528, 576, 581]}
                        hGrid={[346, 370, 395]}
                        axisX={609} axisY={409} priceY={360}
                        prices={[{ t: '160.00', e: '0', y: 346 }, { t: '158.00', e: '0', y: 372 }, { t: '156.00', e: '0', y: 395 }]}
                        tag={{ x: 603, y1: 350, y2: 371, t: '158.79', e: '8' }}
                        bracket={{ x: 598.500, y1: 345, y2: 408, label: '500.0 点', tx: 595, ty: 413 }}
                        times={[{ t: '04 5 月 2026, UTC+8', x: 363 }, { t: '14 5 月', x: 514 }, { t: '16 5 月', x: 564 }]}
                        ticks={[380, 431, 480, 530, 580, 630]}
                        tip={{ x1: 552, x2: 597, y1: 400, y2: 419, nx: 580, ny: 394 }}
                      >
                        <polyline points={toAbs(USD, 350, 310)} fill="none" stroke={ORANGE} strokeWidth="2.500" />
                        <polyline points={toAbs(USD2, 350, 310)} fill="none" stroke={ORANGE} strokeWidth="2.500" />
                        <circle cx={362.300} cy={385.300} r="1.300" fill={ORANGE} />
                        <circle cx={398.300} cy={390} r="1.300" fill={ORANGE} />
                      </Chart>
                      <Scroll w={76} />
                    </ChartWin>
                  </ChartRow>
                </Charts>

                <ToolsCol>
                  <ToolGrip />
                  <Tool><ToolActive><IconPointer /></ToolActive></Tool>
                  <Tool><IconCross /></Tool>
                  <Tool><IconCrossDots /></Tool>
                  <Tool><IconCrossBox /></Tool>
                  <ToolDiv />
                  <Tool><IconLine /></Tool>
                  <Tool><IconPen /></Tool>
                  <Tool><IconHatch /></Tool>
                  <Tool><IconFork /></Tool>
                  <Tool><IconF2 /></Tool>
                  <Tool><IconRect /><CornerL /></Tool>
                  <Tool><IconUp /><CornerL /></Tool>
                  <Tool><IconT /></Tool>
                  <ToolDiv />
                  <Swatch />
                  <Tool><Dot /><CornerL /></Tool>
                  <ToolDiv />
                  <Tool><IconCam /></Tool>
                  <ToolDiv />
                  <Tool><IconHouse /></Tool>
                </ToolsCol>
              </TopRow>

              <HSash><span>=</span><span>▼</span><span>=</span></HSash>

              <TabBar $h={26}>
                <Tab $active $w={54}>头寸<Badge>0</Badge></Tab>
                <Tab $w={53}>订单<Badge>0</Badge></Tab>
                <Tab $w={54}>交易历史</Tab>
                <Tab $w={76}>价格提醒<Badge>0</Badge></Tab>
                <Tab $w={32}>交易</Tab>
              </TabBar>
              <BottomPanel>
                <FilterRow>
                  <Field $w={180}>
                    <span />
                    <IconFind />
                  </Field>
                  <Field $w={148} $ml={5}>所有方向(默认)<Tri $ml={0} /></Field>
                  <Field $w={137} $ml={5}>不汇总(默认)<Tri $ml={0} /></Field>
                  <GreenBtn><IconDocAdd />新订单</GreenBtn>
                  <SplitBtn>
                    <SplitMain>无仓位可平</SplitMain>
                    <SplitArrow><Tri $c="#fff" $ml={0} /></SplitArrow>
                  </SplitBtn>
                </FilterRow>
                <Table>
                  <Th $w={57}>已创建 (…</Th>
                  <Th>交易品种</Th>
                  <Th>数量</Th>
                  <Th>方向</Th>
                  <Th>入场</Th>
                  <Th>止盈</Th>
                  <Th>止损</Th>
                  <Th $w={60} $last $left>净盈利 …</Th>
                </Table>
                <Summary>
                  <SumLabel>余额:</SumLabel><SumVal>USD 25 000.00</SumVal><SumSep />
                  <SumLabel>净值:</SumLabel><SumVal>USD 25 000.00</SumVal><SumSep />
                  <SumLabel>保证金:</SumLabel><SumVal>USD 0.00</SumVal><SumSep />
                  <SumLabel>可用保证金:</SumLabel><SumVal>USD 25 000.00</SumVal><SumSep />
                  <SumLabel>保证金水平:</SumLabel><SumVal>—</SumVal>
                  <SumGear><FaCog size={14} /></SumGear>
                </Summary>
                <BottomScroll><ArrowL /><ScrollTrack $start><Thumb $w={403} /></ScrollTrack><ArrowR /></BottomScroll>
              </BottomPanel>
            </LeftCol>

            <VSash><SashBars /><SashTri /><SashBars /></VSash>

            <RightCol>
              <TabBar $h={25}>
                <Tab $active $w={54}>交易品种</Tab>
                <Tab $w={54}>市场深度</Tab>
                <Tab $w={32}>日历</Tab>
                <Tab $w={68}>Autochartist</Tab>
                <Tab $w={32}>新闻</Tab>
                <Tab $w={32}>通知</Tab>
              </TabBar>
              <RightBody>
                <SymbolRow>
                  <SymbolSelect>EURUSD<Tri $ml={0} /></SymbolSelect>
                  <SquareBtns>
                    <SquareBtn><IconShare /></SquareBtn>
                    <SquareBtn><IconStar /></SquareBtn>
                    <SquareBtn><IconChartBox /></SquareBtn>
                    <SquareBtn><IconBell /></SquareBtn>
                  </SquareBtns>
                </SymbolRow>
                <ScrollWrap>
                  <ScrollArea>
                    <Card>
                      <CardHead>新订单<SquareBtn><IconChev /></SquareBtn></CardHead>
                      <Inner>
                        <SymLine>
                          <Pause />Euro vs US Dollar
                          <Change>-46.1 (-0.40%)</Change>
                          <SquareBtn $dark><IconShare /></SquareBtn>
                        </SymLine>
                        <OrderTabs>
                          <OrderTab $active>市价单</OrderTab>
                          <OrderTab>限价单</OrderTab>
                          <OrderTab>止损单</OrderTab>
                          <OrderTab>止损限价单</OrderTab>
                        </OrderTabs>
                        <Quote>
                          <QuoteBox>卖出<Price>1.1620<PriceEnd>7</PriceEnd></Price></QuoteBox>
                          <QuoteBox $buy>买入<Price>1.1621<PriceEnd>0</PriceEnd></Price></QuoteBox>
                        </Quote>
                        <Bars><Bar $c={ORANGE} /><Bar $c={GREEN} /></Bars>
                        <Stats>点差: 0.3; 最高价: 1.16723; 最低价: 1.16169</Stats>
                        <FormGrid>
                          <Label>数量</Label>
                          <CheckRow><Box />市价范围<InfoI>i</InfoI></CheckRow>
                          <InputRow>
                            <NumInput $w={127}>
                              <Spin><SpinU /><SpinD /></Spin>
                              <QtyValue>1</QtyValue>
                              <Tri $push />
                            </NumInput>手
                          </InputRow>
                          <InputRow>
                            <NumInput $w={125} $dim>
                              <Spin><SpinU /><SpinD /></Spin>
                            </NumInput>点
                          </InputRow>
                          <InfoLine>买入保证金: ~3 873.67</InfoLine>
                          <InfoLine>点值: 10.00 USD</InfoLine>
                        </FormGrid>
                        <StopRow>
                          <CheckRow><Box /><Under>止损</Under></CheckRow>
                          <CheckRow><Box /><Under>止盈</Under></CheckRow>
                        </StopRow>
                        <Note><div>备注</div><Count>0/100</Count></Note>
                        <Submit>下单</Submit>
                        <Closed>休市中。仅接受挂单。<ClosedArrows><IconDouble /></ClosedArrows></Closed>
                      </Inner>
                    </Card>
                    <Card>
                      <CardHead><CardTitle><CardGrip />市场深度(标准)</CardTitle><SquareBtn><IconChev /></SquareBtn></CardHead>
                      <Inner $min={120} />
                    </Card>
                  </ScrollArea>
                  <VBar><ArrowUp /><VThumb /><ArrowDn /></VBar>
                </ScrollWrap>
              </RightBody>
            </RightCol>
          </Workspace>

          <Status>
            <StatusDot />交易阶段:&nbsp;&nbsp;不活跃&nbsp;&nbsp;&nbsp;(开始于24:06:20)
            <StatusRight>
              <StatusLabel>当前时间:</StatusLabel>
              <Clock>UTC+8</Clock><Tri $ml={5} />
              <Clock $ml={9}>03:53 17.05.2026</Clock><StatusSep />
              <OpenLabel>打开</OpenLabel><Toggle /><StatusSep $ml={0} />
              216 ms &thinsp;/&thinsp; 216 ms
            </StatusRight>
          </Status>
        </Main>
      </Page>
    </>
  );
}
